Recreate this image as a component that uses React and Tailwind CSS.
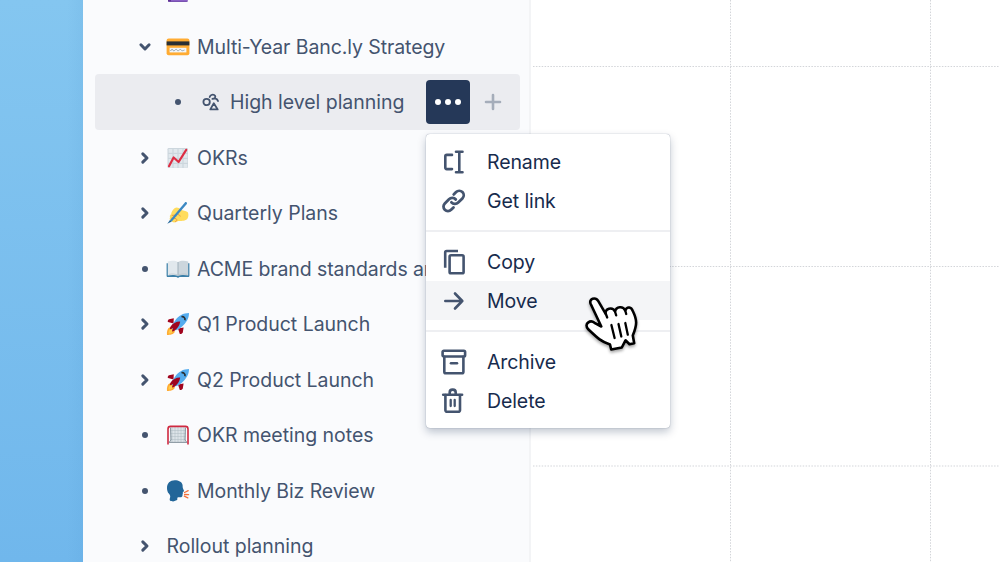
import clsx from "clsx";

// ---------- page tree emoji ----------

const NotebookIcon = () => (
  <svg viewBox="0 0 24 24" className="w-6 h-6">
    <rect x="2" y="0.5" width="20" height="22.4" rx="2" fill="#9266cc" />
    <path d="M2 20.5h3v2.400H3.500A1.500 1.500 0 0 1 2 21.400z" fill="#5c2e91" />
    <path d="M2.500 22.300h19" stroke="#744eaa" strokeWidth="1" />
  </svg>
);

const CardIcon = () => (
  <svg viewBox="0 0 24 24" className="w-6 h-6">
    <rect x="0.6" y="3.6" width="22.8" height="16.6" rx="2" fill="#ffac33" />
    <rect x="0.6" y="6.4" width="22.8" height="4" fill="#292f33" />
    <rect x="3.6" y="12.8" width="16.8" height="4.6" fill="#f4f7f9" />
    <path
      d="M4.5 16c1-2 2-2.2 2.5-.8s1.500.6 2.200-.3 1.400-.8 1.900.3 1.700.4 2.300-.3 1.300-.6 1.900.3 1.700.5 3.200-.2"
      fill="none"
      stroke="#8899a6"
      strokeWidth="0.9"
    />
  </svg>
);

const ChartIcon = () => (
  <svg viewBox="0 0 24 24" className="w-6 h-6">
    <rect x="1.5" y="2" width="20.5" height="20" rx="1.2" fill="#ccd6dd" />
    <g fill="#e1e8ed">
      {[3, 8, 13, 18].map((y) =>
        [2.6, 7.6, 12.6, 17.6].map((x) => (
          <rect key={`${x}-${y}`} x={x} y={y} width="3.8" height="3.8" />
        ))
      )}
    </g>
    <path
      d="M3 20.2 7.6 11.5 12.6 16 20.2 3.8"
      fill="none"
      stroke="#dd2e44"
      strokeWidth="2.2"
      strokeLinecap="round"
      strokeLinejoin="round"
    />
  </svg>
);

const WritingIcon = () => (
  <svg viewBox="0 0 24 24" className="w-6 h-6">
    <path
      d="M8.500 7.200c2-1.400 4.500-.6 6 1.200 2.500 1 5.200 1.200 7 2.600 1.300 1.300 1.200 5.300-.3 7-2.400 2.400-6.500 1.800-9 2-2 1.200-4.300 2-5.700 1-1.100-.6-1.600-1.200-2.100-2-1.200-.8-.7-2-.3-2.800-.8-1 .2-2.400 1-3 .3-2.200 1.600-4.800 3.400-6z"
      fill="#ffdc5d"
    />
    <path
      d="M5.800 14.500c1.700-.5 3.400-.3 4.500.6M5.200 17.300c1.800-.6 3.500-.2 5 .6 1.300.8.500 2.300-1 2.900M12 13.500c1.300.3 2 1 2.300 2"
      fill="none"
      stroke="#ef9645"
      strokeWidth="1"
    />
    <path d="M4 19.200 18.900 1.500c.7-.8 1.900-.4 2.100.5.100.5-.1.900-.4 1.300L5.800 20.400z" fill="#3b88c3" />
    <path d="m1.300 22.800 2.700-3.800 1.700 1.500z" fill="#226699" />
  </svg>
);

const BookIcon = () => (
  <svg viewBox="0 0 24 24" className="w-6 h-6">
    <path d="M.6 6.200h22.800v12.600c0 .8-.5 1.300-1.300 1.300h-8.600c-.4.900-2.600.9-3 0H1.900c-.8 0-1.300-.5-1.300-1.300z" fill="#3b7fa8" />
    <path d="M1.800 4.500C5 3.300 9.500 3.300 12 5v14c-3-1.400-7-1.300-10.200-.5z" fill="#e1e8ed" />
    <path d="M22.200 4.500C19 3.300 14.500 3.300 12 5v14c3-1.400 7-1.300 10.200-.5z" fill="#ccd6dd" />
    <path d="M12 5v14" stroke="#99aab5" strokeWidth="0.9" />
    <path d="M3 17.400c3-.6 6-.5 9 .8 3-1.300 6-1.400 9-.8" fill="none" stroke="#b4c1ca" strokeWidth="0.7" />
  </svg>
);

const RocketIcon = () => (
  <svg viewBox="0 0 24 24" className="w-6 h-6">
    <path d="M7.800 6.300 3 7.200C2 7.600 1.200 9.600 2 10l5.500 1.500z" fill="#a0041e" />
    <path d="m17.600 15.600-.8 5c-.3 1.100-2.600 2-3.100 1.200L12 16.400z" fill="#a0041e" />
    <path d="M1 23c-.3-3 .3-7 3-7.700 2.800-.4 5.100 2 4.700 4.500C8 22.400 4.200 23 1 23z" fill="#ffac33" />
    <path d="M2.500 21.500c0-2 .6-3.800 2-4.200 1.400 0 2.400 1.100 2.100 2.400-.4 1.300-2.200 1.800-4.100 1.800z" fill="#ffcc4d" />
    <path d="M23 1.100c-5.800 0-10.300 2.700-14 7.600-1.700 2.300-3 4.400-3.300 6.100-.2 2 1.400 3.600 3.500 3.500 2.400-.3 4.600-1.800 6.600-3.600C20.300 11 23 6.500 23 1.100z" fill="#55acee" />
    <path d="M4.200 17.300c-.6 0-.3-1.700.6-3C6.700 11.700 10 9.600 13.700 9.600c.6 0 .5.6.3.9-.4 3.100-2.800 6.200-5.600 8.200-1.500 1-2.600 1-2.400.3l1.300-3.200c-1 .6-2.200 1.500-3.100 1.500z" fill="#a0041e" />
    <path d="M15.500 4.800c2.200-.6 4 1.300 3.400 3.400" fill="none" stroke="#292f33" strokeWidth="1.700" />
  </svg>
);

const GoalIcon = () => (
  <svg viewBox="0 0 24 24" className="w-6 h-6">
    <path d="m5 4-1 15.500h16L19 4z" fill="#dce3e8" />
    <path
      d="M6 4v15M9 4v15M12 4v15M15 4v15M18 4v15M4.500 7.500h15M4.500 10.500h15M4.500 13.500h15M4.500 16.500h15"
      stroke="#aebac3"
      strokeWidth="0.5"
    />
    <path d="m4.500 4.500.5 12.500-2 2.500M19.500 4.500 19 17l2 2.500M3 19.400h18" fill="none" stroke="#7b8a94" strokeWidth="0.9" />
    <path
      d="M2 21.500V6c0-1.800.9-2.600 2.500-2.600h15c1.600 0 2.500.8 2.500 2.600v15.500"
      fill="none"
      stroke="#cf2940"
      strokeWidth="1.600"
    />
  </svg>
);

const SpeakingIcon = () => (
  <svg viewBox="0 0 24 24" className="w-6 h-6">
    <path
      d="M8.800 1.300c4 0 7 1.700 7.700 4.500.3 1.500 0 2.500.5 3.700l.9 2c.3.800-.1 1.200-1 1.300-.2.900.2 1.500-.2 2.200-.3.500-.2.900-.2 1.500 0 1.500-1.300 1.900-3 1.700-1.700-.2-2.200.3-2.200 1.300.3 1.300-.3 1.900-1.500 2.100-1.200 1.200-4.700 1-5.800-.1-.6-.6-.2-1.900.1-3 .4-1.500-.1-2.500-1.300-3.900C1.500 13 1 11 1 8.900c0-4.500 3-7.600 7.800-7.600z"
      fill="#226699"
    />
    <path
      d="m18.500 13.500 3.700-1.800M18.600 15.500l4 .2M18.300 17.200l3.500 1.700"
      stroke="#f4703a"
      strokeWidth="1.300"
      strokeLinecap="round"
    />
  </svg>
);

const ShapesIcon = () => (
  <svg
    viewBox="0 0 20 20"
    className="w-5 h-5"
    fill="none"
    stroke="#44546f"
    strokeWidth="1.800"
    strokeLinecap="round"
    strokeLinejoin="round"
  >
    <circle cx="5.600" cy="10" r="3.200" />
    <path d="M12.800 11.300 9.300 17.400h7.400z" />
    <path d="M8.700 5.100c.5-1.900 2.700-3 4.500-2.100 1.500.8 1.400 2.400.3 3.200M11.400 6.900c2-.8 4.800-.5 5.600 2.200" />
  </svg>
);

// ---------- menu icons ----------

const iconProps = {
  viewBox: "0 0 28 28",
  className: "w-7 h-7",
  fill: "none",
  stroke: "#44546f",
  strokeWidth: 2.6,
  strokeLinecap: "round",
  strokeLinejoin: "round",
};

const RenameIcon = () => (
  <svg {...iconProps}>
    <path d="M12 6.900H6.800a1.500 1.500 0 0 0-1.500 1.500v11.200a1.500 1.500 0 0 0 1.500 1.500H12" />
    <path d="M19.300 4v20M16 3.800h6.500M16 24.200h6.500" />
  </svg>
);

const LinkIcon = () => (
  <svg {...iconProps} strokeWidth="2.8">
    <g transform="translate(1.600 1.900)">
      <path d="M9.800 13.400a4.600 4.600 0 0 0 6.800.3l4.200-4.200a4.400 4.400 0 0 0-6.300-6.300l-2.400 2.300" />
      <path d="M14.200 10.600a4.600 4.600 0 0 0-6.800-.3l-4.200 4.200a4.400 4.400 0 0 0 6.300 6.300l2.400-2.300" />
    </g>
  </svg>
);

const CopyIcon = () => (
  <svg {...iconProps} strokeLinecap="butt">
    <path d="M5.200 19.800V4.500a1.500 1.500 0 0 1 1.500-1.500H18" />
    <rect x="9.600" y="7.300" width="14" height="18" rx="1.400" />
  </svg>
);

const MoveIcon = () => (
  <svg {...iconProps}>
    <path d="M5.300 14h17M15 6.500l7.300 7.500-7.300 7.500" />
  </svg>
);

const ArchiveIcon = () => (
  <svg {...iconProps}>
    <rect x="2.600" y="2.700" width="22.500" height="5.800" rx="1.200" />
    <path d="M4.300 8.700v15a1.600 1.600 0 0 0 1.600 1.600h15.900a1.600 1.600 0 0 0 1.600-1.600v-15" />
    <path d="M11 15.300h6" />
  </svg>
);

const TrashIcon = () => (
  <svg {...iconProps}>
    <path d="M3.200 7.700h18.900" />
    <path d="M9.700 7V5.400a2.800 2.800 0 0 1 2.800-2.800h.4a2.800 2.800 0 0 1 2.800 2.800V7" />
    <path d="M5.400 8v15.200A1.600 1.600 0 0 0 7 24.800h11.400a1.600 1.600 0 0 0 1.600-1.600V8" />
    <path d="M10.700 13v6M14.700 13v6" strokeWidth="2.300" />
  </svg>
);

const HandCursor = () => (
  <svg viewBox="0 0 60 60" className="w-[60px] h-[60px] overflow-visible drop-shadow-[0_2px_1.5px_rgba(0,0,0,0.35)]">
    <path
      d="M21.300 33.500 10.600 10.800C8.600 5.800 15.400 3.400 18.300 8.200L25.700 20.800C24.500 15.500 32.500 13.300 35 18.500 36.300 13.200 43 12.800 45.200 17.400 47.300 12.800 51.400 14 52.800 18 57.200 27 57.300 31.500 52.800 42.500L54.200 50.200 49.500 51.200 45.500 47.300 41.800 54.500 31.200 56.500 30 51.500C21 48.500 18 45.500 8 36 3.500 30.500 10.500 26.500 14.500 29.800z"
      fill="#fff"
      stroke="#000"
      strokeWidth="2.600"
      strokeLinejoin="round"
    />
    <path
      d="m25.700 20.500 1.500 4M35 18.500l1.200 3.800M45.200 17.400l1 3.600M31.400 32l3.200 13M38.500 31l2.800 12.500M45.300 30l2.500 11.700"
      stroke="#000"
      strokeWidth="2.300"
      strokeLinecap="round"
    />
  </svg>
);

const Chevron = ({ open }) => (
  <svg
    viewBox="0 0 14 14"
    className={clsx("w-3.5 h-3.5", open && "rotate-90")}
    fill="none"
    stroke="#44546f"
    strokeWidth="3"
    strokeLinecap="round"
    strokeLinejoin="round"
  >
    <path d="M4.800 2.900 9 7l-4.200 4.100" />
  </svg>
);

const Dot = () => <span className="w-1.5 h-1.5 rounded-full bg-[#44546f]" />;

// ---------- data ----------

const pages = [
  { title: "", marker: "none", Icon: NotebookIcon },
  { title: "Multi-Year Banc.ly Strategy", marker: "open", Icon: CardIcon, tight: true },
  { title: "High level planning", marker: "dot", Icon: ShapesIcon, selected: true },
  { title: "OKRs", marker: "closed", Icon: ChartIcon },
  { title: "Quarterly Plans", marker: "closed", Icon: WritingIcon },
  { title: "ACME brand standards and", marker: "dot", Icon: BookIcon, tight: true },
  { title: "Q1 Product Launch", marker: "closed", Icon: RocketIcon },
  { title: "Q2 Product Launch", marker: "closed", Icon: RocketIcon },
  { title: "OKR meeting notes", marker: "dot", Icon: GoalIcon },
  { title: "Monthly Biz Review", marker: "dot", Icon: SpeakingIcon, tight: true },
  { title: "Rollout planning", marker: "closed" },
];

const menuGroups = [
  [
    { label: "Rename", Icon: RenameIcon },
    { label: "Get link", Icon: LinkIcon },
  ],
  [
    { label: "Copy", Icon: CopyIcon },
    { label: "Move", Icon: MoveIcon, active: true },
  ],
  [
    { label: "Archive", Icon: ArchiveIcon },
    { label: "Delete", Icon: TrashIcon },
  ],
];

const PageRow = ({ title, marker, Icon, selected, tight }) => (
  <div
    className={clsx(
      "flex items-center shrink-0 rounded-[4px]",
      selected ? "-mt-[0.5px] h-[56px] bg-[#ebecf0] pl-[75px]" : "h-[55.5px] pl-[42px]"
    )}
  >
    <span className="flex items-center justify-center w-4 h-4 shrink-0">
      {marker === "dot" && <Dot />}
      {marker === "open" && <Chevron open />}
      {marker === "closed" && <Chevron />}
    </span>
    {Icon && (
      <span className={clsx("flex shrink-0", selected ? "ml-[15.5px]" : "ml-[13.5px]")}>
        <Icon />
      </span>
    )}
    <span
      className={clsx(
        "whitespace-nowrap text-[19.5px] leading-6 text-[#44546f]",
        tight ? "tracking-[-0.09px]" : "tracking-[-0.03px]",
        !Icon && "ml-[14px]",
        Icon && (selected ? "ml-[9px]" : "ml-[7px]")
      )}
    >
      {title}
    </span>
    {selected && (
      <div className="ml-auto flex items-center">
        <button className="flex items-center justify-center gap-1 w-[44px] h-[44px] rounded-[4px] bg-[#253858]">
          <span className="w-1.5 h-1.5 rounded-full bg-white" />
          <span className="w-1.5 h-1.5 rounded-full bg-white" />
          <span className="w-1.5 h-1.5 rounded-full bg-white" />
        </button>
        <button className="flex ml-[12.5px] mr-[17.5px]">
          <svg viewBox="0 0 20 20" className="w-5 h-5" stroke="#a5adba" strokeWidth="2.600" strokeLinecap="round">
            <path d="M10 3v14M3 10h14" />
          </svg>
        </button>
      </div>
    )}
  </div>
);

const ContextMenu = () => (
  <div className="absolute left-[426px] top-[134px] w-[244px] py-2 rounded-[4px] bg-white shadow-[0_0_1px_rgba(9,30,66,0.5),0_4px_8px_rgba(9,30,66,0.25)]">
    {menuGroups.map((group, i) => (
      <div key={i} className={clsx(i > 0 && "mt-[10px] border-t-2 border-[#eeeff2] pt-[10px]")}>
        {group.map(({ label, Icon, active }) => (
          <div
            key={label}
            className={clsx("flex items-center h-[39px] pl-[14px]", active && "bg-[#f4f5f7]")}
          >
            <Icon />
            <span className="ml-[19px] text-[19.5px] leading-6 tracking-[-0.1px] text-[#172b4d]">{label}</span>
          </div>
        ))}
      </div>
    ))}
  </div>
);

const CanvasGrid = () => (
  <svg
    viewBox="0 0 468 562"
    className="w-[468px] h-[562px]"
    fill="none"
    stroke="#d3d5d9"
    strokeWidth="1"
    strokeDasharray="1.5 1.4"
  >
    <path d="M2 66.500h466M2 266.500h466M2 466h466M199.500 0v562M399.500 0v562" />
  </svg>
);

const App = () => {
  return (
    <div className="relative flex w-[999px] h-[562px] overflow-hidden bg-white font-['Inter',sans-serif]">
      <div className="flex justify-end w-[83px] shrink-0 bg-gradient-to-b from-[#84c6f0] to-[#70b7ec]">
        <div className="w-4 bg-gradient-to-r from-transparent to-[#4a90c8]/10" />
      </div>

      <aside className="w-[448px] shrink-0 h-full pl-[11.5px] pr-[9px] overflow-hidden bg-[#fafbfd] border-r-2 border-[#f3f4f6]">
        <div className="flex flex-col -mt-[36.5px]">
          {pages.map((page, i) => (
            <PageRow key={i} {...page} />
          ))}
        </div>
      </aside>

      <main className="flex-1 overflow-hidden">
        <CanvasGrid />
      </main>

      <ContextMenu />

      <div className="absolute left-[580px] top-[293px]">
        <HandCursor />
      </div>
    </div>
  );
};

export default App;
